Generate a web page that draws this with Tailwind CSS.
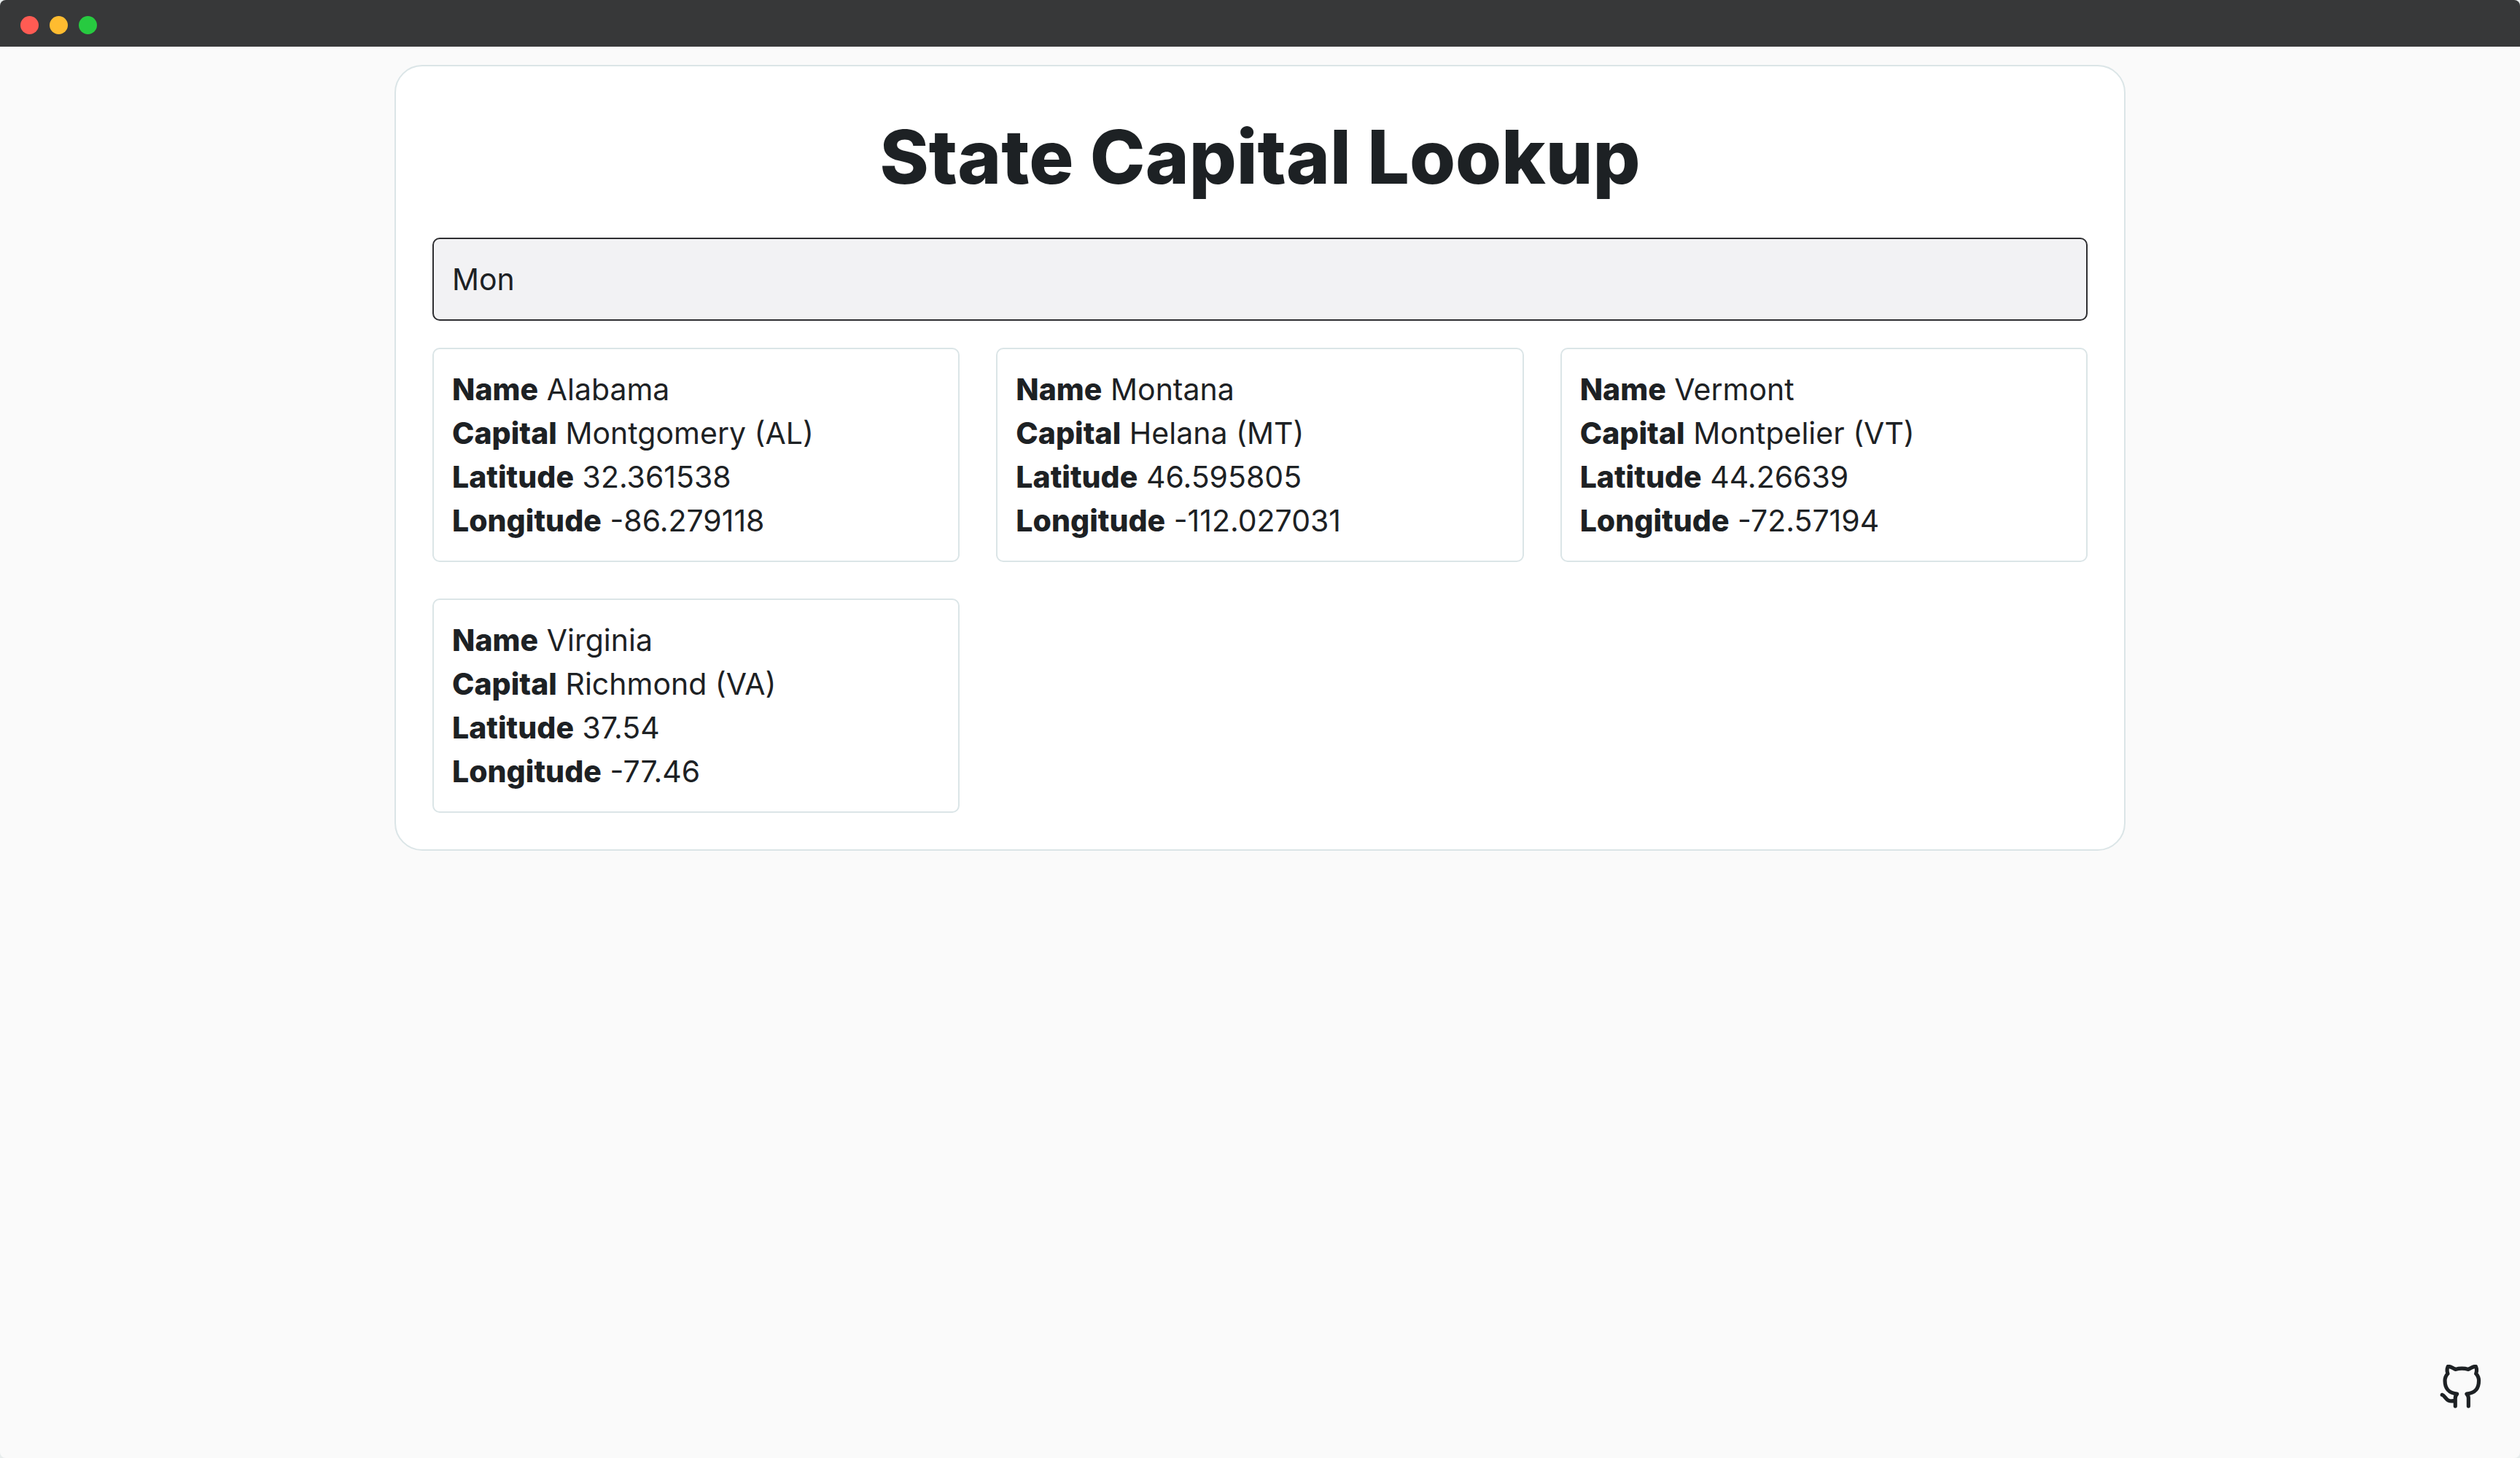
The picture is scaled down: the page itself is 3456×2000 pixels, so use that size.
<!DOCTYPE html>
<html lang="en">
<head>
<meta charset="utf-8">
<meta name="viewport" content="width=device-width, initial-scale=1">
<title>State Capital Lookup</title>
<script src="https://cdn.jsdelivr.net/npm/@tailwindcss/browser@4"></script>
</head>
<body class="bg-[#e8eded] font-[Inter,sans-serif] text-[41px] leading-[60px] text-[#1d2124]">
<div class="flex min-h-screen flex-col overflow-hidden rounded-lg bg-[#fafafa]">
  <header class="flex h-16 items-center gap-[15px] bg-[#373839] px-7 pt-1">
    <span class="size-[25px] rounded-full bg-[#ff5b53]"></span>
    <span class="size-[25px] rounded-full bg-[#ffbc30]"></span>
    <span class="size-[25px] rounded-full bg-[#27ca40]"></span>
  </header>
  <main class="mx-auto mt-[25px] w-full max-w-[2374px] rounded-[38px] border-2 border-[#dbe5e7] bg-white p-[50px]">
    <h1 class="mb-[37px] text-center text-[102px] leading-[148px] font-extrabold">State Capital Lookup</h1>
    <input type="text" aria-label="Search states and capitals" value="Mon" class="block w-full rounded-[10px] border-2 border-[#2e2e31] bg-[#f2f2f4] px-[25px] py-[25px] leading-[60px] outline-none">
    <section class="mt-[37px] grid grid-cols-3 gap-[50px]" aria-label="Results">
      <article class="rounded-[10px] border-2 border-[#dbe5e7] p-[25px]">
        <p><strong class="font-extrabold">Name</strong> Alabama</p>
        <p><strong class="font-extrabold">Capital</strong> Montgomery (AL)</p>
        <p><strong class="font-extrabold">Latitude</strong> 32.361538</p>
        <p><strong class="font-extrabold">Longitude</strong> -86.279118</p>
      </article>
      <article class="rounded-[10px] border-2 border-[#dbe5e7] p-[25px]">
        <p><strong class="font-extrabold">Name</strong> Montana</p>
        <p><strong class="font-extrabold">Capital</strong> Helana (MT)</p>
        <p><strong class="font-extrabold">Latitude</strong> 46.595805</p>
        <p><strong class="font-extrabold">Longitude</strong> -112.027031</p>
      </article>
      <article class="rounded-[10px] border-2 border-[#dbe5e7] p-[25px]">
        <p><strong class="font-extrabold">Name</strong> Vermont</p>
        <p><strong class="font-extrabold">Capital</strong> Montpelier (VT)</p>
        <p><strong class="font-extrabold">Latitude</strong> 44.26639</p>
        <p><strong class="font-extrabold">Longitude</strong> -72.57194</p>
      </article>
      <article class="rounded-[10px] border-2 border-[#dbe5e7] p-[25px]">
        <p><strong class="font-extrabold">Name</strong> Virginia</p>
        <p><strong class="font-extrabold">Capital</strong> Richmond (VA)</p>
        <p><strong class="font-extrabold">Latitude</strong> 37.54</p>
        <p><strong class="font-extrabold">Longitude</strong> -77.46</p>
      </article>
    </section>
  </main>
  <a href="#" aria-label="View source on GitHub" class="fixed right-[50px] bottom-[66px]">
    <svg class="block size-[62px]" viewBox="0 0 24 24" fill="none" stroke="currentColor" stroke-width="2" stroke-linecap="round" stroke-linejoin="round"><path d="M9 19c-5 1.5-5-2.5-7-3m14 6v-3.87a3.37 3.37 0 0 0-.94-2.61c3.14-.35 6.44-1.54 6.44-7A5.44 5.44 0 0 0 20 4.77 5.07 5.07 0 0 0 19.91 1S18.73.65 16 2.48a13.38 13.38 0 0 0-7 0C6.27.65 5.09 1 5.09 1A5.07 5.07 0 0 0 5 4.77a5.44 5.44 0 0 0-1.5 3.78c0 5.42 3.3 6.61 6.44 7A3.37 3.37 0 0 0 9 18.13V22"/></svg>
  </a>
</div>
</body>
</html>
